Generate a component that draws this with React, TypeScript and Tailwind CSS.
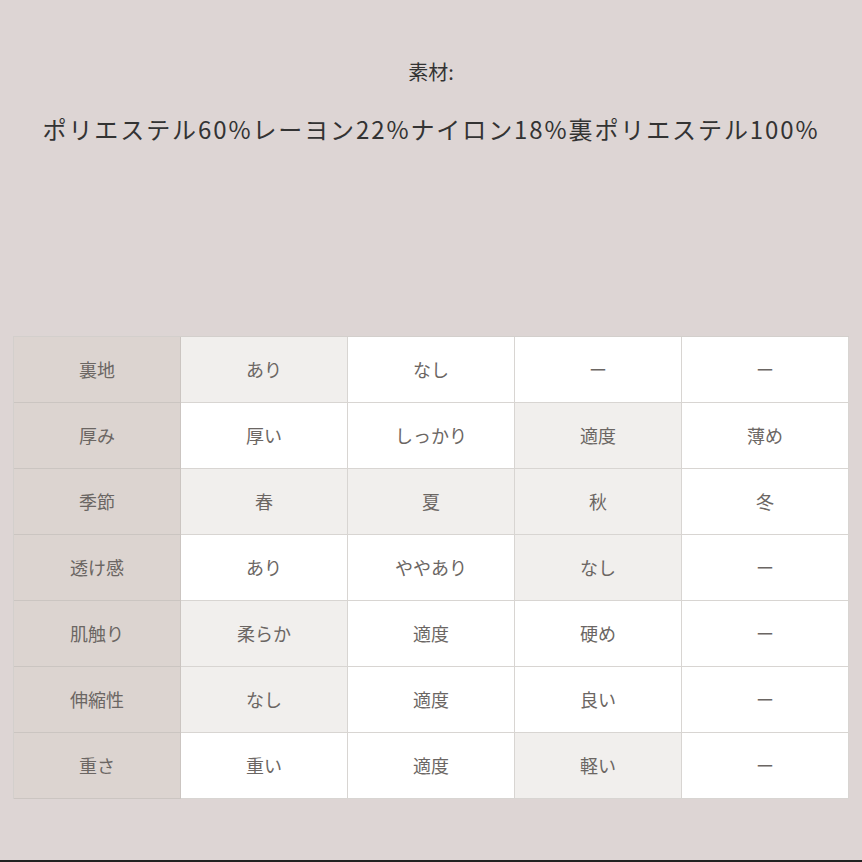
const rows: { label: string; cells: { text: string; shade?: boolean }[] }[] = [
  { label: "裏地", cells: [{ text: "あり", shade: true }, { text: "なし" }, { text: "ー" }, { text: "ー" }] },
  { label: "厚み", cells: [{ text: "厚い" }, { text: "しっかり" }, { text: "適度", shade: true }, { text: "薄め" }] },
  { label: "季節", cells: [{ text: "春", shade: true }, { text: "夏", shade: true }, { text: "秋", shade: true }, { text: "冬" }] },
  { label: "透け感", cells: [{ text: "あり" }, { text: "ややあり" }, { text: "なし", shade: true }, { text: "ー" }] },
  { label: "肌触り", cells: [{ text: "柔らか", shade: true }, { text: "適度" }, { text: "硬め" }, { text: "ー" }] },
  { label: "伸縮性", cells: [{ text: "なし", shade: true }, { text: "適度" }, { text: "良い" }, { text: "ー" }] },
  { label: "重さ", cells: [{ text: "重い" }, { text: "適度" }, { text: "軽い", shade: true }, { text: "ー" }] },
];

export default function App() {
  return (
    <div
      className="w-[862px] h-[862px] bg-[#ddd5d4] flex flex-col border-b-2 border-[#222]"
      style={{ fontFamily: '"Noto Sans CJK JP", "Noto Sans", sans-serif' }}
    >
      <div className="pt-[56px] text-center text-[20px] leading-[32px] text-[#333]">素材:</div>
      <div className="mt-[24px] text-center text-[24px] leading-[34px] text-[#333] tracking-[1.9px] whitespace-nowrap">
        ポリエステル60%レーヨン22%ナイロン18%裏ポリエステル100%
      </div>

      <div className="mt-[190px] ml-[13px] w-[836px] grid grid-cols-5 border-l border-t border-[#d3cfcc]">
        {rows.map((r) => (
          <div key={r.label} className="contents">
            <div className="h-[66px] flex items-center justify-center bg-[#dcd4d0] border-r border-b border-[#cbc5c1] text-[18px] text-[#6b6663]">
              {r.label}
            </div>
            {r.cells.map((c, i) => (
              <div
                key={i}
                className={
                  c.shade
                    ? "h-[66px] flex items-center justify-center bg-[#f1efed] border-r border-b border-[#d8d5d2] text-[18px] text-[#6b6663]"
                    : "h-[66px] flex items-center justify-center bg-white border-r border-b border-[#d8d5d2] text-[18px] text-[#6b6663]"
                }
              >
                {c.text}
              </div>
            ))}
          </div>
        ))}
      </div>
    </div>
  );
}
